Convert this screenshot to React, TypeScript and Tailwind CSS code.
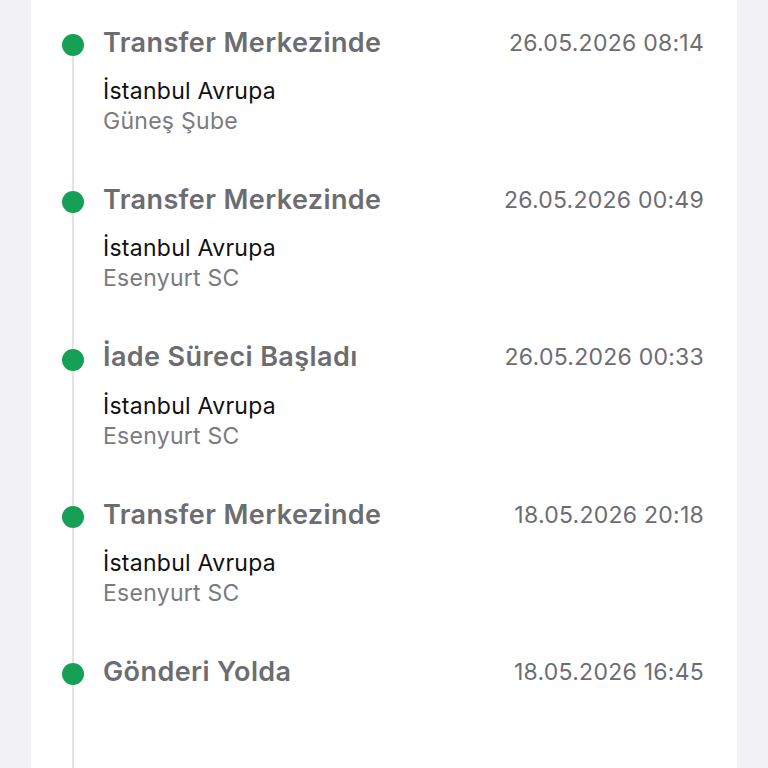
import React from "react";

type Step = {
    title: string;
    date: string;
    city?: string;
    branch?: string;
};

const steps: Step[] = [
    { title: "Transfer Merkezinde", date: "26.05.2026 08:14", city: "İstanbul Avrupa", branch: "Güneş Şube" },
    { title: "Transfer Merkezinde", date: "26.05.2026 00:49", city: "İstanbul Avrupa", branch: "Esenyurt SC" },
    { title: "İade Süreci Başladı", date: "26.05.2026 00:33", city: "İstanbul Avrupa", branch: "Esenyurt SC" },
    { title: "Transfer Merkezinde", date: "18.05.2026 20:18", city: "İstanbul Avrupa", branch: "Esenyurt SC" },
    { title: "Gönderi Yolda", date: "18.05.2026 16:45" },
];

const TimelineRow = ({ step, first }: { step: Step; first: boolean }) => {
    return (
        <div className="flex h-[157.3px]">
            {/* dot + rail */}
            <div className="w-[72px] flex flex-col items-start pl-[31px]">
                <div className={`ml-[10px] w-[2px] h-[34px] ${first ? "bg-transparent" : "bg-[#e4e4e6]"}`} />
                <div className="w-[22px] h-[22px] rounded-full bg-[#16a055]" />
                <div className="ml-[10px] w-[2px] flex-1 bg-[#e4e4e6]" />
            </div>
            <div className="flex-1 pt-[27px] pr-[33px]">
                <div className="flex items-center justify-between h-[32px]">
                    <span className="text-[27px] font-semibold text-[#6c6d71] tracking-[0.4px]">{step.title}</span>
                    <span className="text-[23px] text-[#6c6d71] tracking-[0.25px]">{step.date}</span>
                </div>
                {step.city ? (
                    <div className="mt-[17px] tracking-[0.27px]">
                        <div className="text-[23px] leading-[30px] text-[#111]">{step.city}</div>
                        <div className="text-[23px] leading-[30px] text-[#7a7b7f]">{step.branch}</div>
                    </div>
                ) : null}
            </div>
        </div>
    );
};

export default function App() {
    return (
        <div className="w-[768px] h-[768px] overflow-hidden bg-[#f2f2f4]" style={{ fontFamily: "Inter, 'Noto Sans', sans-serif" }}>
            <div className="ml-[31px] w-[706px] h-full bg-white">
                {steps.map((s, i) => (
                    <TimelineRow key={i} step={s} first={i === 0} />
                ))}
            </div>
        </div>
    );
}
